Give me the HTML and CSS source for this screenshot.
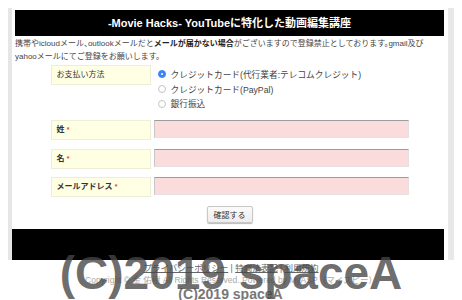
FILE: index.html
```html
<html>
    <head>
        <link rel="stylesheet" href="styles.css">
    </head>
    <body>
        <div class="page">
            <h1 class="title">-Movie Hacks- YouTubeに特化した動画編集講座</h1>
            <p class="notice">携帯やicloudメール、outlookメールだと<b>メールが届かない場合</b>がございますので登録禁止としております。gmail及び<br>yahooメールにてご登録をお願いします。</p>

            <form class="order-form" name="order">
                <div class="row row-pay">
                    <div class="label">お支払い方法</div>
                    <div class="choices">
                        <div class="choice"><span class="radio checked"></span>クレジットカード(代行業者:テレコムクレジット)</div>
                        <div class="choice"><span class="radio"></span>クレジットカード(PayPal)</div>
                        <div class="choice"><span class="radio"></span>銀行振込</div>
                    </div>
                </div>
                <div class="row">
                    <div class="label strong">姓 <span class="req">*</span></div>
                    <input class="field" type="text" name="sei">
                </div>
                <div class="row">
                    <div class="label strong">名 <span class="req">*</span></div>
                    <input class="field" type="text" name="mei">
                </div>
                <div class="row">
                    <div class="label strong">メールアドレス <span class="req">*</span></div>
                    <input class="field" type="email" name="email">
                </div>
                <div class="actions">
                    <button class="button" type="button">確認する</button>
                </div>
            </form>

            <div class="bottom-bar"></div>
        </div>

        <div class="site-footer">
            <div class="links"><a href="#">プライバシーポリシー</a> | <a href="#">特商法表記</a> | <a href="#">利用規約</a></div>
            <div class="copy">Copyright © 金 佑樹 All Rights Reserved. Powered by MyASP（マイスピー）</div>
            <div class="small-mark">(C)2019 spaceA</div>
            <div class="watermark">(C)2019 spaceA</div>
        </div>
    </body>
</html>
```

FILE: styles.css
```css
body {
    margin: 8px 8px 0 8px;
    background-color: #fff;
}
* {
    box-sizing: border-box;
    font-family: "Liberation Sans", "Noto Sans CJK JP", sans-serif;
}
.page {
    border-left: 4px solid #e6e6e6;
    border-right: 6px solid #e8e8e8;
    padding: 2px 4px 0 3px;
}
.title {
    margin: 0;
    height: 26px;
    line-height: 26px;
    background-color: #000;
    color: #fff;
    font-size: 11px;
    font-weight: bold;
    text-align: center;
}
.notice {
    margin: 1px 0 0 0;
    font-size: 8px;
    line-height: 13px;
    color: #444;
    font-feature-settings: "halt";
}
.notice b {
    color: #222;
}
.order-form {
    width: 358px;
    margin: 2px auto 0 auto;
}
.row {
    display: flex;
    margin-top: 8.5px;
}
.row-pay {
    margin-top: 0;
    margin-bottom: 9px;
}
.label {
    width: 100px;
    height: 20px;
    line-height: 18px;
    padding-left: 5px;
    background-color: #ffffe3;
    border: 1px solid #eeeed8;
    font-size: 8px;
    color: #333;
}
.strong {
    font-weight: bold;
}
.req {
    color: #e8433b;
    font-size: 7px;
}
.choices {
    margin-left: 7px;
    padding-top: 2px;
}
.choice {
    display: flex;
    align-items: center;
    height: 14.8px;
    font-size: 8.7px;
    color: #444;
}
.radio {
    width: 8px;
    height: 8px;
    border-radius: 50%;
    border: 1px solid #c4c4c4;
    background-color: #fff;
    margin-right: 5px;
    position: relative;
}
.radio.checked {
    border-color: #3a84f5;
    background-color: #3a84f5;
}
.radio.checked::after {
    content: "";
    position: absolute;
    left: 2px;
    top: 2px;
    width: 2px;
    height: 2px;
    border-radius: 50%;
    background-color: #fff;
}
.field {
    width: 255px;
    height: 18px;
    margin: 0 0 0 3px;
    padding: 0;
    background-color: #fadcdc;
    border: 1px solid #e8e0e0;
    border-top: 1px solid #9c9c9c;
    border-left: 1px solid #c8c8c8;
}
.actions {
    text-align: center;
    margin-top: 9px;
}
.button {
    width: 46px;
    height: 17px;
    padding: 0;
    font-size: 8px;
    color: #333;
    background: linear-gradient(#fbfbfb, #ececec);
    border: 1px solid #c8c8c8;
    border-radius: 2px;
    box-shadow: 0 1px 1px #bbb;
}
.bottom-bar {
    height: 31px;
    margin: 6px 0 0 -3px;
    background-color: #000;
}
.site-footer {
    position: relative;
    text-align: center;
    padding-top: 2px;
}
.links {
    font-size: 8.5px;
    line-height: 12px;
    color: #666;
}
.links a {
    color: #666;
}
.copy {
    font-size: 8.5px;
    line-height: 13px;
    color: #aaa;
}
.small-mark {
    font-size: 14px;
    line-height: 14px;
    font-weight: bold;
    color: #777;
    margin-left: -1px;
}
.watermark {
    position: absolute;
    left: 0;
    right: 0;
    top: -10px;
    font-size: 46px;
    line-height: 46px;
    font-weight: bold;
    color: rgba(70, 70, 70, 0.8);
    text-align: center;
}
```
